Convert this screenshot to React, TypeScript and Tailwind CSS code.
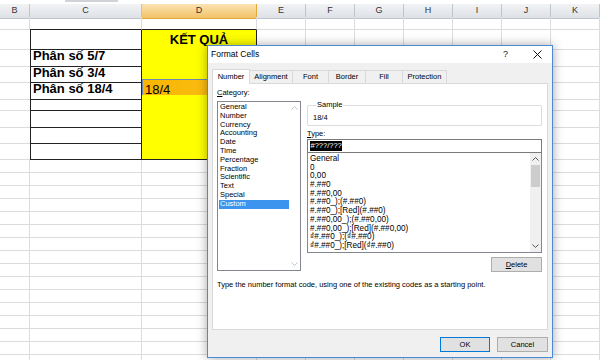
import React from "react";

const COLS = ["B", "C", "D", "E", "F", "G", "H", "I", "J", "K"];

const tableRows = [
  { c: "", d: "KẾT QUẢ", head: true },
  { c: "Phân số 5/7", d: "" },
  { c: "Phân số 3/4", d: "" },
  { c: "Phân số 18/4", d: "18/4", selected: true },
  { c: "", d: "" },
  { c: "", d: "" },
  { c: "", d: "" },
  { c: "", d: "" },
];

const categories = [
  "General",
  "Number",
  "Currency",
  "Accounting",
  "Date",
  "Time",
  "Percentage",
  "Fraction",
  "Scientific",
  "Text",
  "Special",
  "Custom",
];

const formats = [
  "General",
  "0",
  "0,00",
  "#.##0",
  "#.##0,00",
  "#.##0_);(#.##0)",
  "#.##0_);[Red](#.##0)",
  "#.##0,00_);(#.##0,00)",
  "#.##0,00_);[Red](#.##0,00)",
  "₫#.##0_);(₫#.##0)",
  "₫#.##0_);[Red](₫#.##0)",
];

const tabs = [
  { label: "Number", w: "w-[38px]" },
  { label: "Alignment", w: "w-[43px]" },
  { label: "Font", w: "w-[36px]" },
  { label: "Border", w: "w-[37px]" },
  { label: "Fill", w: "w-[37px]" },
  { label: "Protection", w: "w-[44px]" },
];

const gridCols = "grid grid-cols-[30px_112px_115px_repeat(7,49px)]";

function Chevron({ up, color }: { up?: boolean; color: string }) {
  return (
    <svg width="7" height="4" viewBox="0 0 7 4" fill="none">
      <path d={up ? "M0.5 3.5 L3.5 0.5 L6.5 3.5" : "M0.5 0.5 L3.5 3.5 L6.5 0.5"} stroke={color} strokeWidth="1" />
    </svg>
  );
}

function EmptyRow({ h }: { h: string }) {
  return (
    <div className={`${gridCols} ${h}`}>
      {COLS.map((c) => (
        <div key={c} className="border-r border-b border-[#dadcdd] bg-white" />
      ))}
    </div>
  );
}

function Sheet() {
  return (
    <div className="w-[600px] h-[360px] overflow-hidden bg-white font-['Liberation_Sans',Arial,sans-serif]">
      {/* top strip */}
      <div className="h-[4px] flex">
        <div className="ml-[65px] w-[53px] h-[2px] bg-[#cfd3d8]" />
      </div>

      {/* column headers */}
      <div className={`${gridCols} h-[13px]`}>
        {COLS.map((c) => (
          <div
            key={c}
            className={
              c === "D"
                ? "flex items-center justify-center border-r border-b border-[#e2a83c] bg-gradient-to-b from-[#fbe3b2] to-[#f2c266] text-[9px] text-[#333]"
                : "flex items-center justify-center border-r border-b border-[#bfc5cc] bg-gradient-to-b from-[#f2f3f5] to-[#dde1e6] text-[9px] text-[#333]"
            }
          >
            {c}
          </div>
        ))}
      </div>

      {/* row 1, above the table */}
      <div className={`${gridCols} h-[13px]`}>
        {COLS.map((c) => (
          <div
            key={c}
            className={
              c === "C" || c === "D"
                ? "border-r border-b border-r-[#dadcdd] border-b-[#222]"
                : "border-r border-b border-[#dadcdd]"
            }
          />
        ))}
      </div>

      {/* table rows */}
      {tableRows.map((r, i) => {
        const last = i === tableRows.length - 1;
        return (
          <div key={i} className={`${gridCols} h-[16.25px]`}>
            <div className="border-b border-[#dadcdd]" />
            <div className="flex items-center border-x border-b border-[#222] pl-[2px] text-[13px] font-bold text-black">
              {r.c}
            </div>
            {r.selected ? (
              <div className="flex items-center border border-[#6f86ad] bg-gradient-to-r from-[#f7b500] to-[#ffc21a] pl-[2px] text-[13px] text-black">
                {r.d}
              </div>
            ) : (
              <div
                className={
                  last
                    ? "flex items-center justify-center border-r border-b border-[#222] bg-[#ffff00] text-[13px] font-bold text-black"
                    : "flex items-center justify-center border-r border-[#222] bg-[#ffff00] text-[13px] font-bold text-black"
                }
              >
                {r.d}
              </div>
            )}
            {COLS.slice(3).map((c) => (
              <div key={c} className="border-r border-b border-[#dadcdd]" />
            ))}
          </div>
        );
      })}

      {Array.from({ length: 16 }).map((_, i) => (
        <EmptyRow key={i} h="h-[13px]" />
      ))}
    </div>
  );
}

function FormatCells() {
  return (
    <div className="absolute left-[207px] top-[45px] w-[346px] h-[313px] flex flex-col border border-[#4a8bd4] bg-[#f0f0f0] shadow-[0_0_10px_rgba(0,0,0,0.35)] font-['Liberation_Sans',Arial,sans-serif] text-black">
      {/* title bar */}
      <div className="h-[17px] flex items-center bg-white pl-[3px]">
        <span className="text-[8.5px]">Format Cells</span>
        <span className="ml-auto mr-[25px] text-[9px] text-[#222]">?</span>
        <svg className="mr-[10px]" width="9" height="9" viewBox="0 0 9 9">
          <path d="M0.5 0.5 L8.5 8.5 M8.5 0.5 L0.5 8.5" stroke="#111" strokeWidth="1" />
        </svg>
      </div>

      {/* body */}
      <div className="flex-1 flex flex-col px-[4px] pt-[5px] text-[7.5px]">
        {/* tabs */}
        <div className="flex h-[15px] items-end">
          {tabs.map((t, i) =>
            i === 0 ? (
              <div
                key={t.label}
                className={`${t.w} h-[15px] -mb-px z-10 flex items-center justify-center border border-b-0 border-[#d9d9d9] bg-white`}
              >
                {t.label}
              </div>
            ) : (
              <div
                key={t.label}
                className={`${t.w} h-[13px] flex items-center justify-center border border-l-0 border-b-0 border-[#d9d9d9] bg-[#f0f0f0]`}
              >
                {t.label}
              </div>
            )
          )}
        </div>

        {/* panel */}
        <div className="h-[247px] flex flex-col border border-[#d9d9d9] bg-white px-[4px] pt-[4px]">
          <div className="flex gap-[6px]">
            {/* category column */}
            <div className="w-[84px] flex flex-col">
              <div className="h-[13px] leading-[10px]">
                <span className="underline">C</span>ategory:
              </div>
              <div className="h-[170px] flex border border-[#828790]">
                <div className="flex-1 pt-[1px] pl-[1px]">
                  {categories.map((c) => (
                    <div
                      key={c}
                      className={
                        c === "Custom"
                          ? "h-[8.8px] leading-[8.8px] pl-[1px] bg-[#3d94ee] text-white"
                          : "h-[8.8px] leading-[8.8px] pl-[1px]"
                      }
                    >
                      {c}
                    </div>
                  ))}
                </div>
                <div className="w-[11px] flex flex-col items-center justify-between py-[4px]">
                  <Chevron up color="#c2c2c2" />
                  <Chevron color="#c2c2c2" />
                </div>
              </div>
            </div>

            {/* format column */}
            <div className="w-[235px] mt-[12px] flex flex-col">
              <fieldset className="h-[26px] border border-[#dcdcdc] rounded-[1px] pl-[5px]">
                <legend className="ml-[3px] px-[1px] leading-[10px]">Sample</legend>
                <div className="pt-[3px] leading-[10px]">18/4</div>
              </fieldset>
              <div className="mt-[3px] h-[10px] leading-[10px]">
                <span className="underline">T</span>ype:
              </div>
              <div className="h-[14px] flex items-center border border-[#7a7a7a] bg-white pl-[2px]">
                <span className="bg-black px-[0.5px] leading-[10px] text-white">#???/???</span>
              </div>
              <div className="h-[100px] flex border border-t-0 border-[#828790] bg-white">
                <div className="flex-1 pt-[2px] pl-[2px] text-[8.2px]">
                  {formats.map((f) => (
                    <div key={f} className="h-[8.7px] leading-[8.7px] whitespace-nowrap">
                      {f}
                    </div>
                  ))}
                </div>
                <div className="w-[11px] flex flex-col items-center bg-[#f0f0f0]">
                  <div className="h-[12px] flex items-center">
                    <Chevron up color="#555" />
                  </div>
                  <div className="w-[9px] h-[22px] bg-[#cdcdcd]" />
                  <div className="mt-auto h-[12px] flex items-center">
                    <Chevron color="#555" />
                  </div>
                </div>
              </div>
              <div className="mt-[4px] self-end w-[51px] h-[15px] flex items-center justify-center border border-[#adadad] bg-[#e1e1e1]">
                <span>
                  <span className="underline">D</span>elete
                </span>
              </div>
            </div>
          </div>

          <div className="mt-[8px] leading-[10px]">
            Type the number format code, using one of the existing codes as a starting point.
          </div>
        </div>

        {/* footer buttons */}
        <div className="mt-[7px] flex justify-end gap-[7px]">
          <div className="w-[50px] h-[15px] flex items-center justify-center border border-[#0078d7] bg-[#e1e1e1]">
            OK
          </div>
          <div className="w-[51px] h-[15px] flex items-center justify-center border border-[#adadad] bg-[#e1e1e1]">
            Cancel
          </div>
        </div>
      </div>
    </div>
  );
}

export default function App() {
  return (
    <div className="relative w-[600px] h-[360px] overflow-hidden">
      <Sheet />
      <FormatCells />
    </div>
  );
}
